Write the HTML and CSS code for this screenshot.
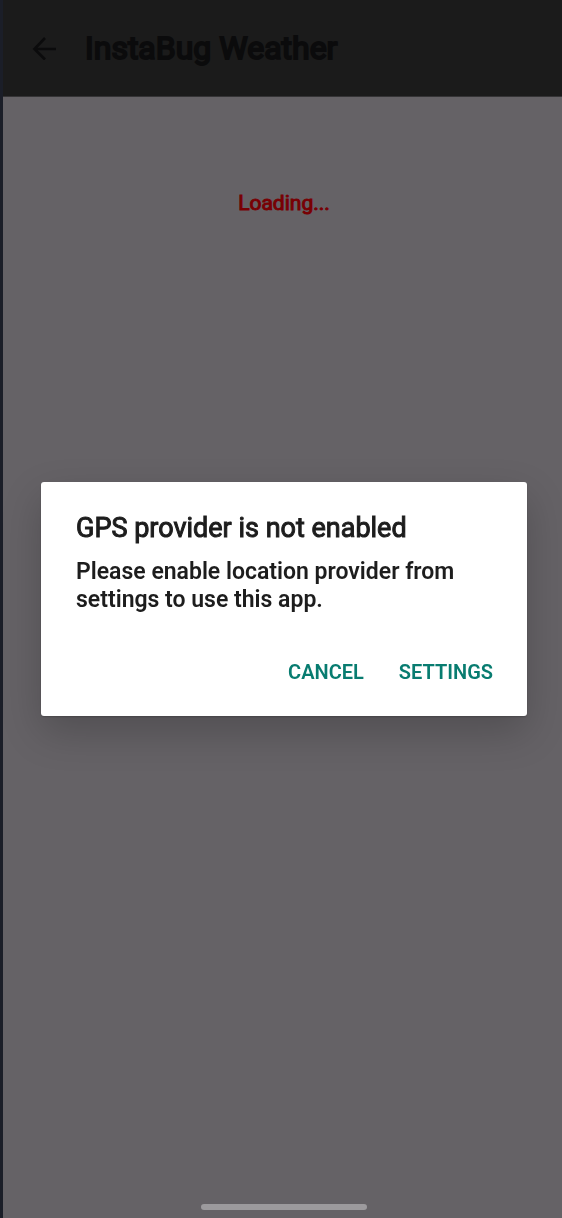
FILE: index.html
```html
<!DOCTYPE html>
<html lang="en">
<head>
<meta charset="utf-8">
<meta name="viewport" content="width=device-width, initial-scale=1">
<title>InstaBug Weather</title>
<link rel="stylesheet" href="styles.css">
</head>
<body>
<div class="screen">
  <header class="app-bar">
    <button class="back" type="button" aria-label="Back">
      <svg viewBox="0 0 24 24" width="24" height="24" fill="none" stroke="currentColor" stroke-width="2.6" aria-hidden="true"><path d="M24 13H3M13 2L2.500 13L13 23.500"/></svg>
    </button>
    <h1 class="app-title">InstaBug Weather</h1>
  </header>
  <main class="content">
    <p class="status" role="status">Loading...</p>
  </main>
  <footer class="nav-area"><div class="nav-handle"></div></footer>
</div>
<div class="overlay">
  <section class="dialog" role="alertdialog" aria-modal="true" aria-labelledby="dialog-title" aria-describedby="dialog-message">
    <h2 class="dialog-title" id="dialog-title">GPS provider is not enabled</h2>
    <p class="dialog-message" id="dialog-message">Please enable location provider from settings to use this app.</p>
    <div class="actions">
      <button class="action" type="button">CANCEL</button>
      <button class="action" type="button">SETTINGS</button>
    </div>
  </section>
</div>
</body>
</html>
```
FILE: styles.css
```css
* { box-sizing: border-box; }
body {
  margin: 0;
  font-family: Roboto, "Liberation Sans", sans-serif;
  font-weight: 600;
  background: #656266;
}
h1, h2, p { margin: 0; }
button {
  padding: 0;
  border: 0;
  background: none;
  font: inherit;
  color: inherit;
}
.screen {
  display: flex;
  flex-direction: column;
  min-height: 100vh;
  border-left: 3px solid #1b1e28;
}
.app-bar {
  display: flex;
  align-items: center;
  gap: 29px;
  height: 97px;
  padding: 0 29px;
  background: #1b1b1b;
  border-bottom: 1px solid #353436;
  color: #0b0b0c;
}
.back { display: flex; }
.app-title {
  font-size: 32px;
  line-height: 40px;
  font-weight: 400;
  -webkit-text-stroke: 2px currentColor;
}
.content {
  flex: 1;
  padding: 92px 0 0 3px;
}
.status {
  font-size: 21px;
  line-height: 28px;
  font-weight: 400;
  -webkit-text-stroke: 1px currentColor;
  text-align: center;
  color: #780004;
}
.nav-area {
  display: flex;
  justify-content: center;
  padding: 0 0 8px 3px;
}
.nav-handle {
  width: 30%;
  height: 6px;
  border-radius: 3px;
  background: #9c9a9d;
}
.overlay {
  position: fixed;
  inset: 0;
  display: flex;
  align-items: center;
  padding: 0 35px 20px 41px;
}
.dialog {
  flex: 1;
  padding: 28px 34px 20px 35px;
  border-radius: 3px;
  background: #fff;
  color: #1d1d1d;
  box-shadow: 0 16px 40px rgba(0, 0, 0, .2), 0 1px 2px rgba(0, 0, 0, .2);
}
.dialog-title {
  margin-bottom: 12px;
  font-size: 27px;
  line-height: 36px;
  font-weight: 400;
  -webkit-text-stroke: 1px currentColor;
}
.dialog-message {
  font-size: 23px;
  line-height: 28px;
}
.actions {
  display: flex;
  justify-content: flex-end;
  gap: 35px;
  padding-top: 34px;
}
.action {
  font-size: 20px;
  line-height: 48px;
  color: #087c70;
}
```
